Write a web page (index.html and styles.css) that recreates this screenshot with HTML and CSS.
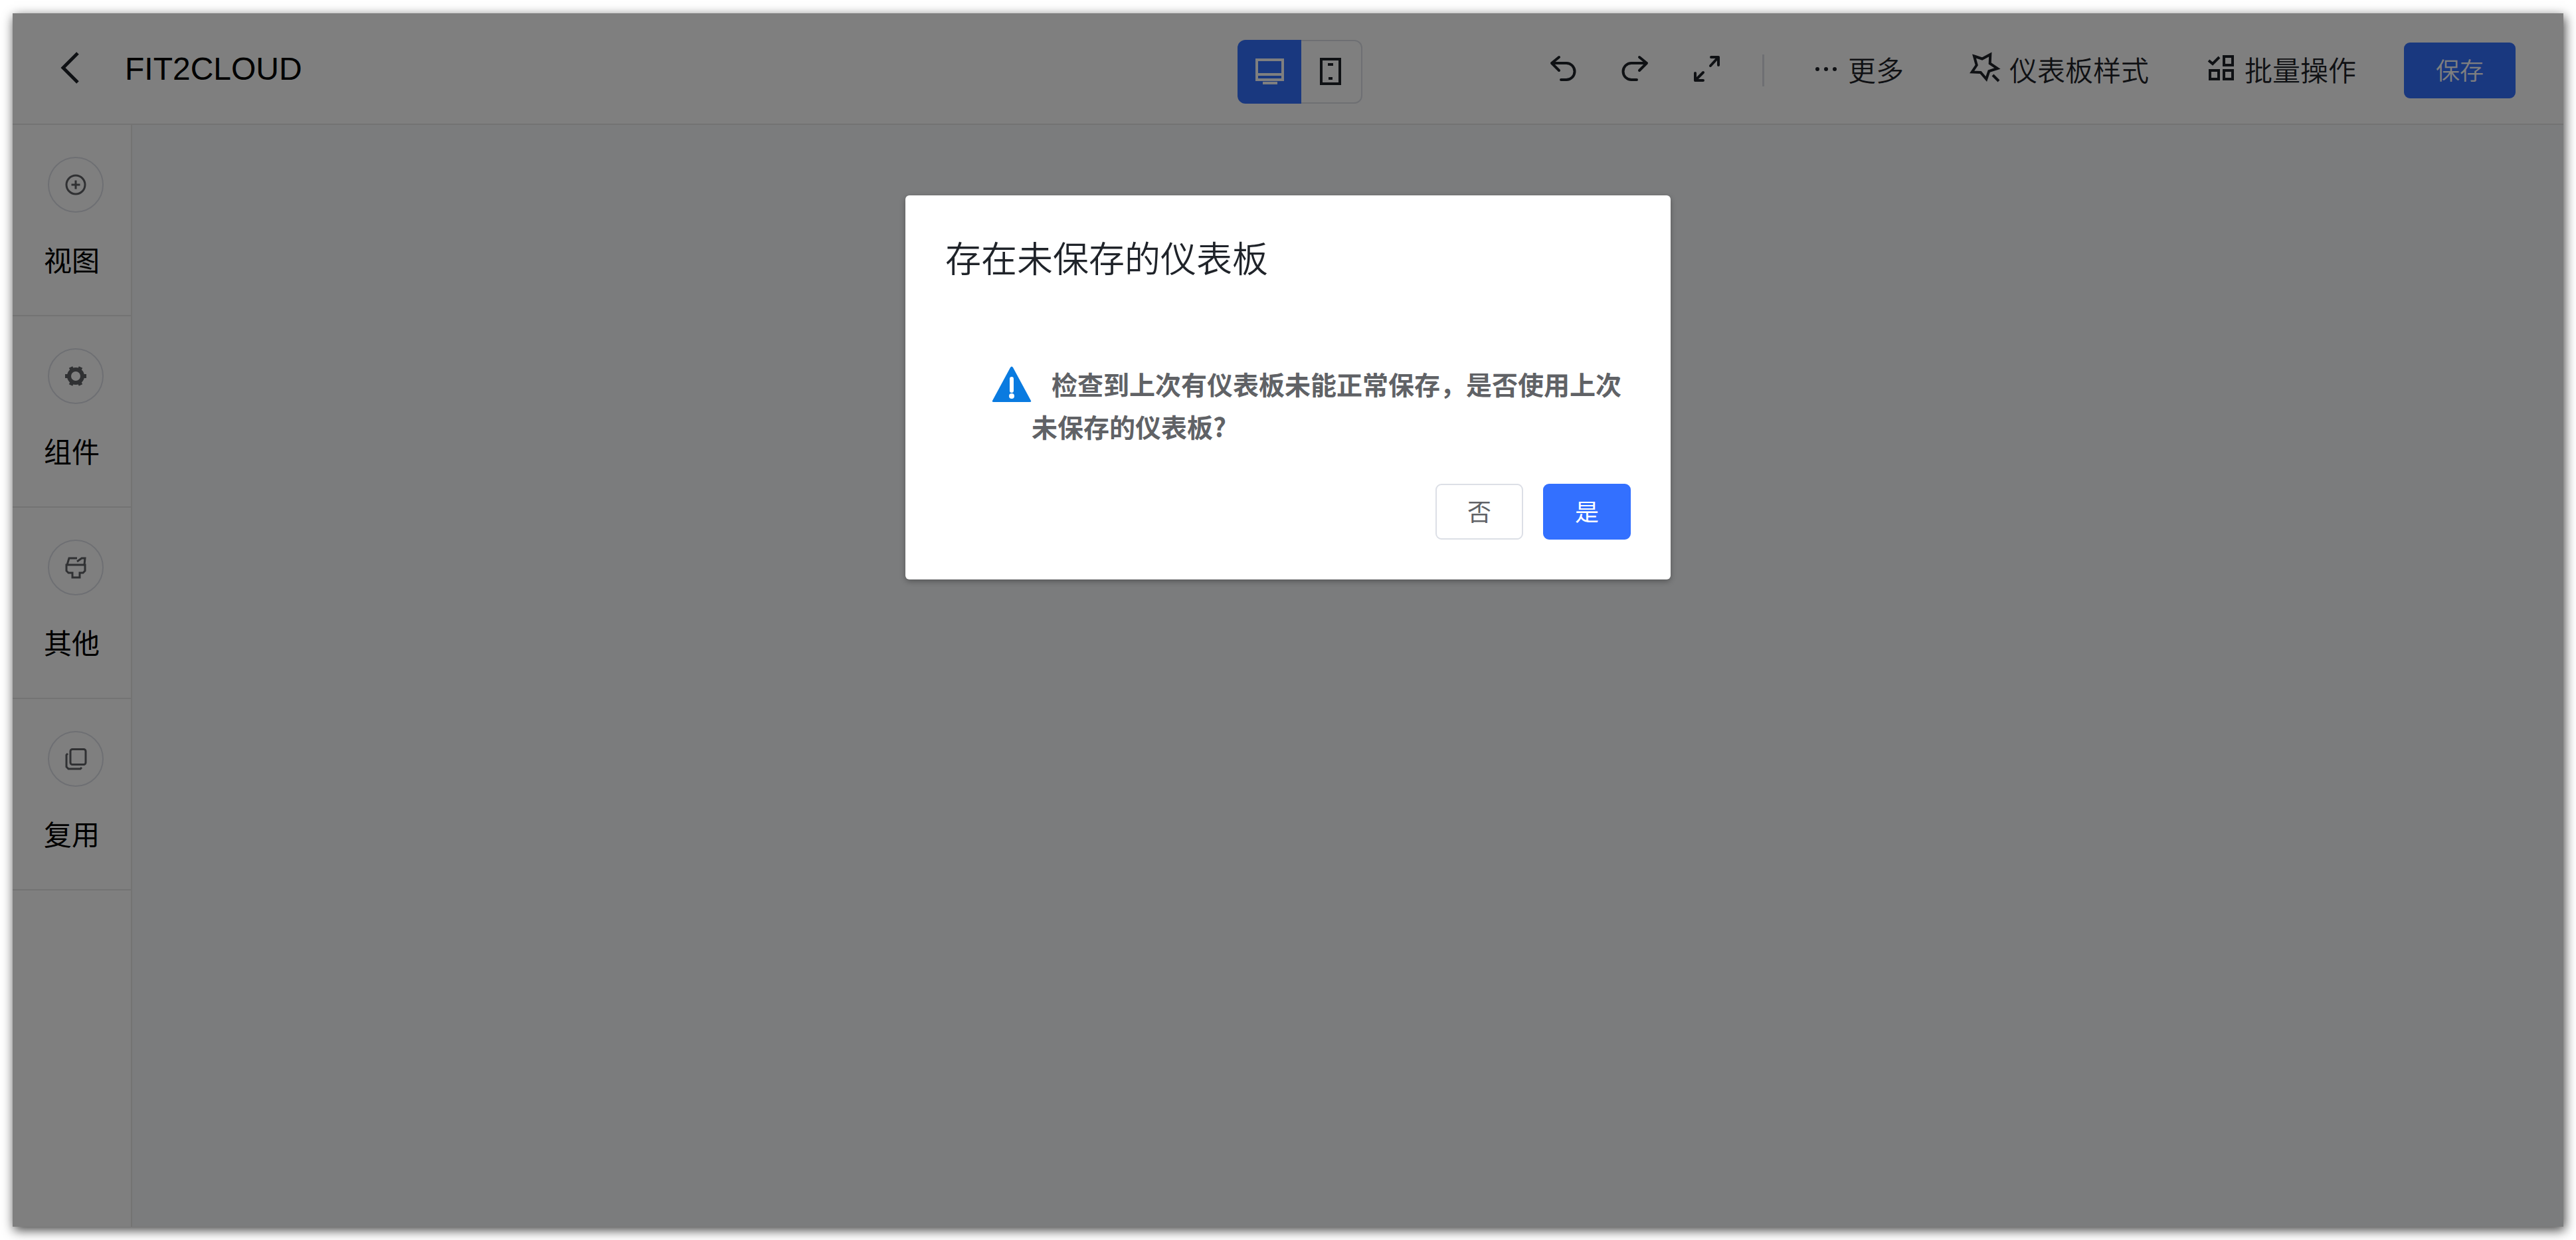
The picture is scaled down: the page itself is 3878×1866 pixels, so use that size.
FILE: index.html
```html
<!DOCTYPE html>
<html lang="zh-CN">
<head>
<meta charset="utf-8">
<title>FIT2CLOUD</title>
<link rel="stylesheet" href="styles.css">
</head>
<body>
<div class="app">
  <header class="topbar">
    <div class="topbar-left">
      <button class="icon-button back" type="button" aria-label="返回">
        <svg viewBox="0 0 30 48"><path d="M26 1 4 23l22 22"/></svg>
      </button>
      <h1 class="title">FIT2CLOUD</h1>
    </div>
    <div class="device-switch">
      <button class="device active" type="button" aria-label="桌面端">
        <svg viewBox="0 0 48 48"><path d="M5 6h39v30H5zM5 28h39M14 41h22"/></svg>
      </button>
      <button class="device" type="button" aria-label="移动端">
        <svg viewBox="0 0 48 48"><path d="M9 5h28v37H9zM19 13h8M20 34h6"/></svg>
      </button>
    </div>
    <div class="topbar-right">
      <div class="history">
        <button class="icon-button" type="button" aria-label="撤销">
          <svg class="icon" viewBox="0 0 48 48"><path d="M18 4 7 13l11 11M7 13h22a12 12 0 0 1 0 25h-8"/></svg>
        </button>
        <button class="icon-button" type="button" aria-label="重做">
          <svg class="icon" viewBox="0 0 48 48"><path d="m31 4 11 9-11 11M42 13H19a12 12 0 0 0 0 25h8"/></svg>
        </button>
        <button class="icon-button" type="button" aria-label="全屏">
          <svg class="icon" viewBox="0 0 48 48"><path d="M30 17 42 4M31 4h11v12M19 27 7 39M7 28v11h12"/></svg>
        </button>
        <span class="divider"></span>
      </div>
      <div class="tools">
        <button class="tool" type="button">
          <svg class="icon" viewBox="0 0 48 48"><g class="solid"><circle cx="14" cy="22" r="3"/><circle cx="27" cy="22" r="3"/><circle cx="40" cy="22" r="3"/></g></svg>
          <span>更多</span>
        </button>
        <button class="tool" type="button">
          <svg class="icon" viewBox="0 0 48 48"><path d="M7 2.500 19 6.500 31.300 0 30.700 13.500 42 21 29.300 25 25.300 37 16.700 27 3.700 26.500 10.700 16zM35 31l9 9"/></svg>
          <span>仪表板样式</span>
        </button>
        <button class="tool" type="button">
          <svg class="icon" viewBox="0 0 48 48"><path d="m6 9 6 5 10-10M29 3h13v13H29zM8 24h13v13H8zM29 24h13v13H29z"/></svg>
          <span>批量操作</span>
        </button>
        <button class="button primary save" type="button">保存</button>
      </div>
    </div>
  </header>

  <div class="workspace">
    <nav class="sidebar">
      <button class="side-item" type="button">
        <span class="side-icon"><svg viewBox="0 0 32 32"><circle cx="16" cy="16" r="14"/><path d="M16 9.500v13M9.500 16h13"/></svg></span>
        视图
      </button>
      <button class="side-item" type="button">
        <span class="side-icon"><svg viewBox="0 0 32 32"><circle class="gear" cx="16" cy="16" r="10"/><path class="teeth" d="M27 16h5M5 16H0M21.500 6.500l2-4M10.500 6.500l-2-4M21.500 25.500l2 4M10.500 25.500l-2 4"/></svg></span>
        组件
      </button>
      <button class="side-item" type="button">
        <span class="side-icon"><svg viewBox="0 0 32 32"><path d="M3 12 6 2h12M29 12l1-10h-5l-7 5M2 12h28v9l-3 3h-5v7H11v-7H5l-3-3z"/></svg></span>
        其他
      </button>
      <button class="side-item" type="button">
        <span class="side-icon"><svg viewBox="0 0 32 32"><rect x="8" y="1.500" width="23" height="23" rx="3"/><path d="M4 8 2 10v18l3 3h18l2-2"/></svg></span>
        复用
      </button>
    </nav>
    <main class="canvas"></main>
  </div>

  <div class="overlay">
    <section class="dialog" role="dialog" aria-modal="true" aria-labelledby="dialog-title">
      <h2 class="dialog-title" id="dialog-title">存在未保存的仪表板</h2>
      <div class="dialog-body">
        <svg class="warning" viewBox="0 0 60 60"><path class="triangle" d="M28 8q2-3 4 0l27 50q1 2-2 2H3q-3 0-2-2z"/><path class="mark" d="M30 25v18"/><circle class="dot" cx="30" cy="51" r="4"/></svg>
        <p class="message">检查到上次有仪表板未能正常保存，是否使用上次未保存的仪表板?</p>
      </div>
      <div class="dialog-actions">
        <button class="button" type="button">否</button>
        <button class="button primary" type="button">是</button>
      </div>
    </section>
  </div>
</div>
</body>
</html>
```
FILE: styles.css
```css
* {
  box-sizing: border-box;
}

body {
  margin: 0;
  min-height: 100vh;
  padding: 20px 19px;
  display: flex;
  background: #fff;
  font-family: "Liberation Sans", "Noto Sans CJK SC", sans-serif;
  font-size: 42px;
  color: #1f2329;
}

button {
  margin: 0;
  padding: 0;
  border: 0;
  background: none;
  color: inherit;
  font: inherit;
  cursor: pointer;
}

svg {
  display: block;
  overflow: visible;
  fill: none;
  stroke: currentColor;
  stroke-width: 4px;
}

.app {
  position: relative;
  flex: 1;
  display: flex;
  flex-direction: column;
  background: #fff;
  box-shadow: 2px 5px 16px rgba(0, 0, 0, 0.75);
}

/* Top bar */
.topbar {
  display: grid;
  grid-template-columns: 1fr auto 1fr;
  align-items: center;
  min-height: 168px;
  padding: 6px 72px 0;
  border-bottom: 2px solid #e6e6e6;
}

.topbar-left {
  display: flex;
  align-items: center;
  gap: 67px;
  margin-bottom: 6px;
}

.back svg {
  width: 30px;
  height: 48px;
  stroke-width: 5px;
}

.title {
  margin: 0;
  font-size: 48px;
  font-weight: 400;
  color: #000;
}

.device-switch {
  display: flex;
  margin: 4px 0 0 36px;
  border-radius: 12px;
}

.device {
  display: flex;
  align-items: center;
  justify-content: center;
  width: 92px;
  height: 96px;
  border: 2px solid #dcdfe6;
  border-left: 0;
  border-radius: 0 12px 12px 0;
}

.device.active {
  width: 96px;
  border: 0;
  border-radius: 12px 0 0 12px;
  background: #3370ff;
  color: #fff;
}

.device svg {
  width: 48px;
  height: 48px;
}

.topbar-right,
.history,
.tools,
.tool {
  display: flex;
  align-items: center;
}

.topbar-right {
  justify-content: flex-end;
  gap: 66px;
}

.history {
  gap: 60px;
}

.icon-button .icon {
  stroke-linecap: round;
  stroke-linejoin: round;
}

.icon {
  width: 48px;
  height: 48px;
}

.solid {
  fill: currentColor;
  stroke: none;
}

.divider {
  width: 3px;
  height: 48px;
  background: #dcdfe6;
}

.tools {
  gap: 84px;
}

.tool {
  gap: 12px;
  font-weight: 350;
  white-space: nowrap;
}

.tool span {
  padding-bottom: 6px;
}

.tool:first-child {
  margin-right: 15px;
}

.button {
  width: 132px;
  height: 84px;
  padding-bottom: 4px;
  border: 2px solid #dcdfe6;
  border-radius: 9px;
  background: #fff;
  color: #606266;
  font-size: 36px;
}

.primary {
  border-color: #3370ff;
  background: #3370ff;
  color: #fff;
}

.save {
  width: 168px;
  margin-left: -12px;
  font-weight: 350;
}

/* Workspace */
.workspace {
  flex: 1;
  display: flex;
}

.sidebar {
  width: 180px;
  border-right: 2px solid #e6e6e6;
}

.side-item {
  display: flex;
  flex-direction: column;
  align-items: center;
  gap: 42px;
  width: 100%;
  padding: 48px 0;
  border-bottom: 2px solid #e6e6e6;
  line-height: 64px;
  color: #000;
}

.side-icon {
  display: flex;
  align-items: center;
  justify-content: center;
  width: 84px;
  height: 84px;
  margin-left: 12px;
  border: 2px solid #dcdfe6;
  border-radius: 50%;
  color: #606266;
}

.side-icon svg {
  width: 32px;
  height: 32px;
  stroke-width: 3px;
}

.side-icon .gear,
.side-icon .teeth {
  stroke-width: 6px;
}

.canvas {
  flex: 1;
  background: #f7f8fa;
}

/* Dialog */
.overlay {
  position: absolute;
  inset: 0;
  display: flex;
  align-items: flex-start;
  justify-content: center;
  padding-top: 274px;
  background: rgba(0, 0, 0, 0.5);
}

.dialog {
  width: 1152px;
  max-width: 100%;
  padding: 60px;
  border-radius: 6px;
  background: #fff;
  box-shadow: 0 3px 9px rgba(0, 0, 0, 0.3);
}

.dialog-title {
  margin: 0;
  font-size: 54px;
  line-height: 74px;
  font-weight: 350;
}

.dialog-body {
  display: flex;
  margin: 117px 0 55px;
  padding-left: 70px;
}

.warning {
  flex: none;
  width: 60px;
  height: 60px;
  stroke: none;
}

.triangle {
  fill: #0a7be0;
}

.mark {
  stroke: #fff;
  stroke-width: 6px;
  stroke-linecap: round;
}

.dot {
  fill: #fff;
}

.message {
  margin: 0;
  font-family: "Noto Sans CJK SC", sans-serif;
  font-size: 39px;
  line-height: 64px;
  font-weight: 700;
  text-indent: 30px;
  color: #606266;
}

.dialog-actions {
  display: flex;
  justify-content: flex-end;
  gap: 30px;
}
```
